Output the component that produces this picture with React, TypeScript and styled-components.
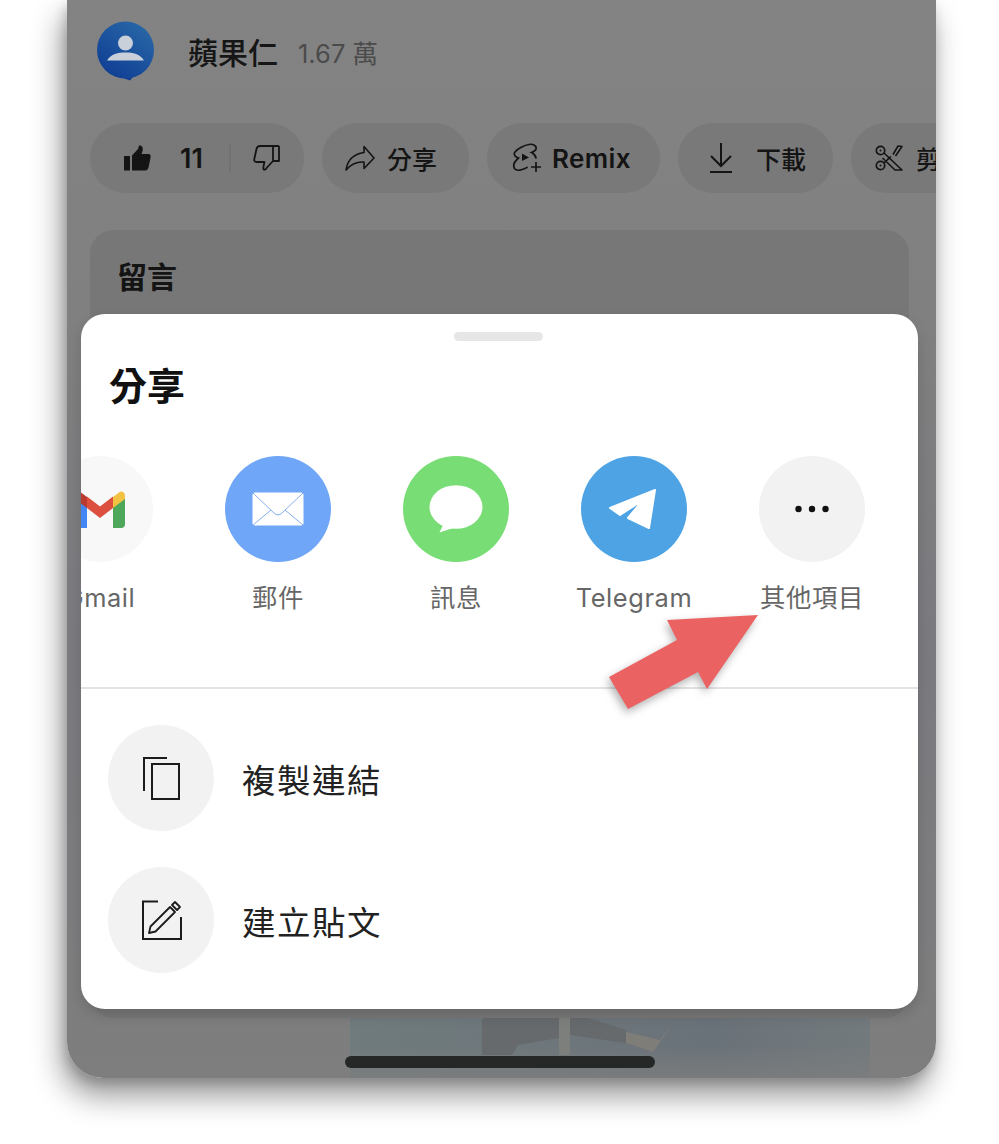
import styled, { createGlobalStyle } from "styled-components"

const GlobalStyle = createGlobalStyle`
    html, body {
        margin: 0;
        padding: 0;
        background: #fff;
    }
    * {
        box-sizing: border-box;
    }
    body {
        font-family: Inter, "Noto Sans CJK TC", sans-serif;
    }
`

const Page = styled.div`
    width: 999px;
    height: 1144px;
    padding-left: 67px;
    overflow: hidden;
`

const Phone = styled.div`
    position: relative;
    width: 869px;
    height: 1078px;
    padding-top: 22px;
    background: linear-gradient(180deg, #838383 0%, #808080 30%, #7b7a7f 60%, #7e7e7e 100%);
    border-radius: 0 0 36px 36px;
    box-shadow: -5px 18px 30px rgba(0, 0, 0, 0.4), -2px 5px 12px rgba(0, 0, 0, 0.18);
    overflow: hidden;
    display: flex;
    flex-direction: column;
`

const Channel = styled.div`
    display: flex;
    align-items: center;
    height: 58px;
    padding-left: 30px;
`

const Name = styled.span`
    margin-left: 34px;
    font-size: 30px;
    font-weight: 500;
    color: #161616;
`

const Subs = styled.span`
    margin-left: 20px;
    font-size: 25.5px;
    color: #4b4b4b;
`

const ChipRow = styled.div`
    display: flex;
    gap: 18px;
    margin-top: 43px;
    padding-left: 23px;
    overflow: hidden;
    flex-shrink: 0;
`

const Chip = styled.div<{ $width: number; $left: number; $gap: number }>`
    display: flex;
    align-items: center;
    flex-shrink: 0;
    width: ${(p) => p.$width}px;
    height: 70px;
    padding-left: ${(p) => p.$left}px;
    gap: ${(p) => p.$gap}px;
    border-radius: 35px;
    background: #797979;
    color: #141414;
    font-size: 25px;
    font-weight: 500;
    white-space: nowrap;
`

const Count = styled.span`
    margin-left: 29px;
    font-size: 27px;
    font-weight: 600;
`

const RemixLabel = styled.span`
    font-size: 26px;
    font-weight: 600;
    letter-spacing: 0.4px;
`

const ChipDivider = styled.span`
    width: 2px;
    height: 30px;
    margin: 0 22px 0 26px;
    background: #717171;
`

const CommentCard = styled.div`
    height: 788px;
    margin: 37px 27px 0 23px;
    padding: 26px 27px;
    background: #777777;
    border-radius: 24px;
    flex-shrink: 0;
`

const CommentTitle = styled.div`
    font-size: 30px;
    line-height: 42px;
    font-weight: 700;
    color: #141414;
`

const Thumb = styled.div`
    height: 60px;
    margin-left: 283px;
    width: 520px;
    flex-shrink: 0;
    background:
        linear-gradient(180deg, rgba(126, 126, 126, 0) 45%, rgba(126, 126, 126, 0.75) 100%),
        linear-gradient(90deg, #6f7b7d 0%, #6d767b 40%, #6a7279 70%, #737a7d 100%);
`

const HomeBar = styled.div`
    position: absolute;
    left: 278px;
    bottom: 10px;
    width: 310px;
    height: 12px;
    border-radius: 6px;
    background: #262828;
`

const Sheet = styled.div`
    position: absolute;
    left: 14px;
    top: 314px;
    width: 837px;
    height: 695px;
    background: #fff;
    border-radius: 24px;
    overflow: hidden;
    display: flex;
    flex-direction: column;
`

const SheetShadow = styled.div`
    position: absolute;
    left: 14px;
    top: 314px;
    width: 837px;
    height: 695px;
    border-radius: 24px;
    box-shadow: 0 6px 14px rgba(0, 0, 0, 0.14);
`

const Grabber = styled.div`
    align-self: center;
    width: 89px;
    height: 9px;
    margin-top: 18px;
    margin-left: -2px;
    border-radius: 5px;
    background: #e6e6e6;
`

const SheetTitle = styled.div`
    margin: 18px 0 0 28px;
    font-size: 38px;
    line-height: 54px;
    font-weight: 700;
    color: #111;
`

const TileRow = styled.div`
    display: flex;
    margin: 43px 0 0 -70px;
    flex-shrink: 0;
`

const Tile = styled.div`
    width: 178px;
    flex-shrink: 0;
    display: flex;
    flex-direction: column;
    align-items: center;
`

const Circle = styled.div<{ $bg: string }>`
    width: 106px;
    height: 106px;
    border-radius: 50%;
    background: ${(p) => p.$bg};
    display: flex;
    align-items: center;
    justify-content: center;
    flex-shrink: 0;
`

const TileLabel = styled.div`
    margin-top: 17px;
    font-size: 25.4px;
    line-height: 38px;
    color: #666;
    white-space: nowrap;
    letter-spacing: 0.6px;
`

const Divider = styled.div`
    height: 2px;
    margin-top: 70px;
    background: #e3e3e3;
    flex-shrink: 0;
`

const ActionList = styled.div`
    display: flex;
    flex-direction: column;
    gap: 36px;
    margin-top: 36px;
    padding-left: 27px;
`

const Action = styled.div`
    display: flex;
    align-items: center;
    gap: 28px;
`

const ActionLabel = styled.span`
    font-size: 33.5px;
    letter-spacing: 1.5px;
    color: #222;
`

const Arrow = styled.svg`
    position: absolute;
    left: 519px;
    top: 291px;
    filter: drop-shadow(-2px 4px 4px rgba(0, 0, 0, 0.3));
`

const stroke = { fill: "none", stroke: "#141414", strokeWidth: 2 }

const Avatar = () => (
    <svg width="57" height="60" viewBox="0 0 57 60">
        <defs>
            <linearGradient id="av" x1="0.9" y1="0" x2="0.2" y2="1">
                <stop offset="0" stopColor="#2a6aa8" />
                <stop offset="1" stopColor="#0f3d94" />
            </linearGradient>
        </defs>
        <path d="M26 57 L33 59.5 L36 56 Z" fill="#0f3d94" />
        <circle cx="28.5" cy="29" r="28.5" fill="url(#av)" />
        <circle cx="28.5" cy="22" r="7.5" fill="#c9d0da" />
        <path d="M10 39.5 C14 33 21 31.5 28.5 31.5 C36 31.5 43 33 47 39.5 Z" fill="#c9d0da" />
    </svg>
)

const ThumbUp = () => (
    <svg width="27" height="26" viewBox="0 0 27 26">
        <rect x="0" y="11" width="6" height="14.5" fill="#141414" />
        <path d="M8 10.5 L14 4 L15 0.5 C18 0 19.5 2.5 18.5 6 L17.5 9 H24.5 C26.5 9 27 11 26.5 13 L24.5 22.5 C24 24.5 23 25.5 21 25.5 H8 Z" fill="#141414" />
    </svg>
)

const ThumbDown = () => (
    <svg width="27" height="26" viewBox="0 0 27 26">
        <path d="M26 1 V16 H20 M20 1 V16 L13.5 23 C13 25 11 25 10.5 24 C10 22 11 19 11.5 17 H3.5 C1.5 17 1 15.5 1.3 14 L3.5 4 C4 2 5 1 7 1 H26" {...stroke} strokeWidth={1.8} strokeLinejoin="round" />
    </svg>
)

const ShareIcon = () => (
    <svg width="30" height="26" viewBox="0 0 30 26">
        <path d="M1 25 C2.5 15 9 9 19 7.5 V1.5 L29 13 L19 23.5 V17 C12 16.5 6 19 1 25 Z" {...stroke} strokeWidth={1.6} strokeLinejoin="round" />
    </svg>
)

const RemixIcon = () => (
    <svg width="30" height="30" viewBox="0 0 30 30">
        <path d="M17 1.5 C13 2 5 6 3 9 C1 12 3.5 14 6.5 15 C3 18 0.5 22 2.5 25.5 C4.5 28.5 10 27 15 24.5 M17 1.5 C21 0.5 25 3 24 6 C23.5 8 21 9 19.5 9.5 C21.5 10.5 23.5 12 24 15" {...stroke} strokeWidth={1.7} strokeLinecap="round" />
        <path d="M10 10.5 L17 14.5 L10 18 Z" fill="#141414" />
        <path d="M24 19 V29 M19 24 H29" {...stroke} strokeWidth={1.7} />
    </svg>
)

const DownloadIcon = () => (
    <svg width="24" height="30" viewBox="0 0 24 30">
        <path d="M12 0 V23 M2 13 L12 23 L22 13 M1 29 H23" {...stroke} />
    </svg>
)

const ScissorsIcon = () => (
    <svg width="28" height="26" viewBox="0 0 28 26">
        <circle cx="5.5" cy="5.5" r="4.2" {...stroke} strokeWidth={1.7} />
        <circle cx="5.5" cy="20.5" r="4.2" {...stroke} strokeWidth={1.7} />
        <circle cx="5.5" cy="5.5" r="1" fill="#141414" />
        <circle cx="5.5" cy="20.5" r="1" fill="#141414" />
        <path d="M9 8 L27 25 L20 25 L7.5 13 M9 18 L16 11.5 M18 9.5 L23 1 L27 1.5 L20.5 11 M12 15 L15 12" {...stroke} strokeWidth={1.6} strokeLinejoin="round" />
    </svg>
)

const GmailIcon = () => (
    <svg width="50" height="37" viewBox="0 0 50 37">
        <path d="M0 7 V33 A4 4 0 0 0 4 37 H12 V16 Z" fill="#4285f4" />
        <path d="M38 16 V37 H46 A4 4 0 0 0 50 33 V7 Z" fill="#4fa75b" />
        <path d="M38 6 L44 1.5 C46.5 -0.5 50 1 50 5 V8 L38 17 Z" fill="#f3c242" />
        <path d="M12 5.5 L25 15.5 L38 5.5 V17 L25 27 L12 17 Z" fill="#dd5040" />
        <path d="M0 8 V5 C0 1 3.5 -0.5 6 1.5 L12 6 V17 Z" fill="#b93a2e" />
    </svg>
)

const MailIcon = () => (
    <svg width="52" height="34" viewBox="0 0 52 34">
        <rect x="0.5" y="0.5" width="51" height="33" rx="2.5" fill="#fff" />
        <path d="M1 1 L22 21 C24.5 23.5 27.5 23.5 30 21 L51 1 M1 33 L19 18 M51 33 L33 18" fill="none" stroke="#86aff0" strokeWidth={1} />
    </svg>
)

const MessageIcon = () => (
    <svg width="54" height="48" viewBox="0 0 54 48">
        <ellipse cx="27" cy="22" rx="26.5" ry="21.8" fill="#fff" />
        <path d="M15 38 L10.5 47.5 L24 43 Z" fill="#fff" />
    </svg>
)

const TelegramIcon = () => (
    <svg width="52" height="44" viewBox="0 0 52 44">
        <path d="M47 3 L2 21 L12 28 L35 13 L20 31 L41 41 Z" fill="#fff" stroke="#fff" strokeWidth={2} strokeLinejoin="round" />
    </svg>
)

const MoreIcon = () => (
    <svg width="34" height="8" viewBox="0 0 34 8">
        <circle cx="3.5" cy="4" r="3.2" fill="#111" />
        <circle cx="17" cy="4" r="3.2" fill="#111" />
        <circle cx="30.5" cy="4" r="3.2" fill="#111" />
    </svg>
)

const CopyIcon = () => (
    <svg width="48" height="48" viewBox="0 0 48 48">
        <rect x="15" y="10" width="27" height="35" fill="none" stroke="#1c1c1c" strokeWidth={2} />
        <path d="M7 37 V4 H30" fill="none" stroke="#1c1c1c" strokeWidth={2} />
    </svg>
)

const EditIcon = () => (
    <svg width="48" height="48" viewBox="0 0 48 48">
        <path d="M21 5.5 H6 V43 H44 V21" fill="none" stroke="#1c1c1c" strokeWidth={2} />
        <path d="M12 37 L13.5 30.5 L33 11 L38 16 L18.5 35.5 Z M35 9 L38 6 L43 11 L40 14 Z" fill="none" stroke="#1c1c1c" strokeWidth={1.8} strokeLinejoin="round" />
    </svg>
)

const PhotoShapes = () => (
    <svg width="520" height="60" viewBox="0 0 520 60">
        <path d="M132 4 Q132 0 136 0 H209 V20 L168 27 L162 37 H132 Z" fill="#666a6c" />
        <path d="M220 0 H238 L276 12 V25 L220 17 Z" fill="#666a6c" />
        <path d="M276 14 L310 22 L323 5 L303 34 L276 25 Z" fill="#7f7d78" />
        <rect x="209" y="0" width="11" height="37" fill="#7d7f7c" />
    </svg>
)

const tiles = [
    { label: "Gmail", bg: "#f8f8f8", icon: <GmailIcon /> },
    { label: "郵件", bg: "#6fa6f8", icon: <MailIcon /> },
    { label: "訊息", bg: "#78dd74", icon: <MessageIcon /> },
    { label: "Telegram", bg: "#4ea3e5", icon: <TelegramIcon /> },
    { label: "其他項目", bg: "#f2f2f2", icon: <MoreIcon /> },
]

export default function App() {
    return (
        <Page>
            <GlobalStyle />
            <Phone>
                <Channel>
                    <Avatar />
                    <Name>蘋果仁</Name>
                    <Subs>1.67 萬</Subs>
                </Channel>
                <ChipRow>
                    <Chip $width={214} $left={34} $gap={0}>
                        <ThumbUp />
                        <Count>11</Count>
                        <ChipDivider />
                        <ThumbDown />
                    </Chip>
                    <Chip $width={147} $left={23} $gap={12}>
                        <ShareIcon />
                        <span>分享</span>
                    </Chip>
                    <Chip $width={173} $left={25} $gap={10}>
                        <RemixIcon />
                        <RemixLabel>Remix</RemixLabel>
                    </Chip>
                    <Chip $width={155} $left={31} $gap={23}>
                        <DownloadIcon />
                        <span>下載</span>
                    </Chip>
                    <Chip $width={120} $left={24} $gap={13}>
                        <ScissorsIcon />
                        <span>剪輯</span>
                    </Chip>
                </ChipRow>
                <CommentCard>
                    <CommentTitle>留言</CommentTitle>
                </CommentCard>
                <Thumb>
                    <PhotoShapes />
                </Thumb>
                <HomeBar />
                <SheetShadow />
                <Sheet>
                    <Grabber />
                    <SheetTitle>分享</SheetTitle>
                    <TileRow>
                        {tiles.map((t) => (
                            <Tile key={t.label}>
                                <Circle $bg={t.bg}>{t.icon}</Circle>
                                <TileLabel>{t.label}</TileLabel>
                            </Tile>
                        ))}
                    </TileRow>
                    <Divider />
                    <ActionList>
                        <Action>
                            <Circle $bg="#f2f2f2">
                                <CopyIcon />
                            </Circle>
                            <ActionLabel>複製連結</ActionLabel>
                        </Action>
                        <Action>
                            <Circle $bg="#f2f2f2">
                                <EditIcon />
                            </Circle>
                            <ActionLabel>建立貼文</ActionLabel>
                        </Action>
                    </ActionList>
                    <Arrow width="170" height="115" viewBox="0 0 170 115">
                        <path d="M158 10 L67 15 L77 35 L9 72 L28 104 L98 67 L107 84 Z" fill="#ea6262" />
                    </Arrow>
                </Sheet>
            </Phone>
        </Page>
    )
}
